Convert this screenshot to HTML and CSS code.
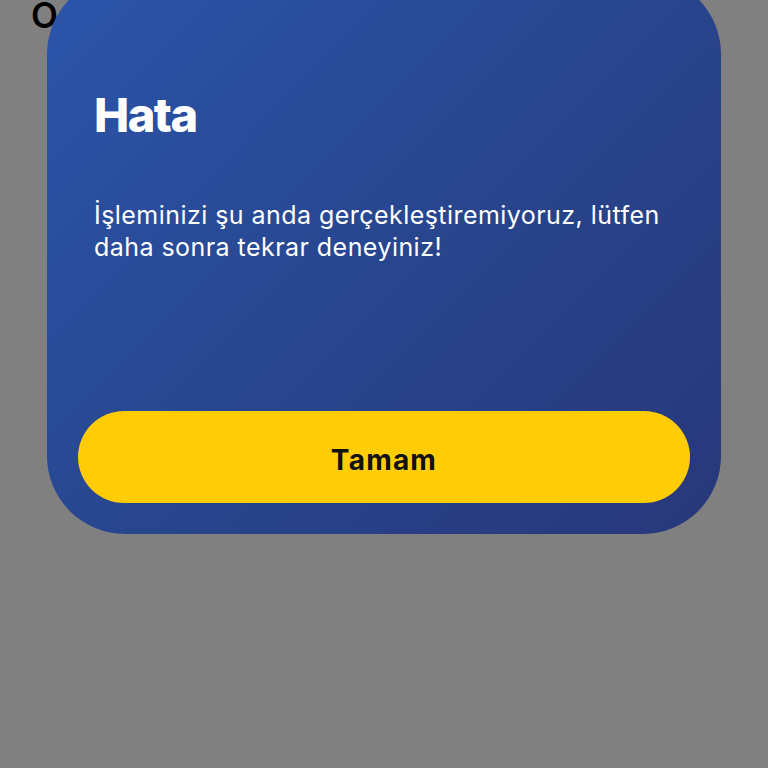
FILE: index.html
```html
<!DOCTYPE html>
<html lang="tr">
<head>
<meta charset="utf-8">
<title>Hata</title>
<link rel="stylesheet" href="styles.css">
</head>
<body>
<div class="page">
  <h1 class="page-title">Odeme</h1>
  <div class="overlay">
    <div class="dialog">
      <h2 class="dialog-title">Hata</h2>
      <p class="dialog-text">İşleminizi şu anda gerçekleştiremiyoruz, lütfen daha sonra tekrar deneyiniz!</p>
      <button class="dialog-button">Tamam</button>
    </div>
  </div>
</div>
</body>
</html>
```
FILE: styles.css
```css
html, body {
  margin: 0;
  padding: 0;
  background: #808080;
}
.page {
  position: relative;
  width: 768px;
  height: 768px;
  overflow: hidden;
  font-family: Inter, "Noto Sans", sans-serif;
}
.page-title {
  margin: 0;
  padding: 2px 0 0 31px;
  font-size: 35px;
  line-height: 26px;
  font-weight: 600;
  color: #000;
}
.overlay {
  position: absolute;
  left: 0;
  top: 0;
  width: 768px;
  height: 768px;
}
.dialog {
  position: absolute;
  left: 47px;
  top: -24px;
  width: 674px;
  height: 558px;
  box-sizing: border-box;
  border-radius: 78px;
  background: linear-gradient(135deg, #2b55ab 0%, #28468f 50%, #28377a 100%);
  padding: 112px 31px 31px;
  display: flex;
  flex-direction: column;
}
.dialog-title {
  margin: 0 0 0 16px;
  font-size: 47px;
  line-height: 54px;
  font-weight: 800;
  letter-spacing: -1.5px;
  color: #fff;
}
.dialog-text {
  margin: 57px 0 0 16px;
  font-size: 25px;
  line-height: 32px;
  font-weight: 400;
  letter-spacing: 0.45px;
  color: #fff;
  width: 585px;
}
.dialog-button {
  margin-top: auto;
  height: 92px;
  width: 100%;
  border: none;
  border-radius: 46px;
  padding: 5px 0 0;
  background: #ffcc05;
  color: #111;
  font-family: Inter, "Noto Sans", sans-serif;
  font-size: 28px;
  font-weight: 700;
  letter-spacing: 1.2px;
  cursor: pointer;
}
```
